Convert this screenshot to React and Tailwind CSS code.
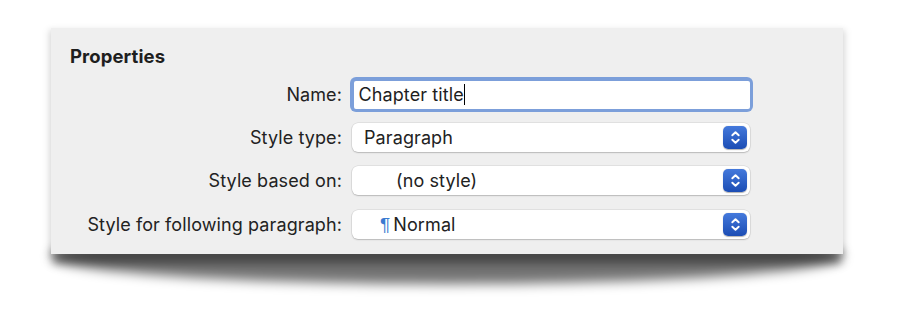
import React from "react";

function Stepper() {
  return (
    <div className="w-[24px] h-[23px] rounded-[5px] bg-gradient-to-b from-[#4479dc] to-[#1c4db4] flex items-center justify-center shadow-[0_0.5px_1px_rgba(0,0,0,0.3)]">
      <svg width="11" height="15" viewBox="0 0 11 15" fill="none" stroke="white" strokeWidth="1.9" strokeLinecap="round" strokeLinejoin="round">
        <path d="M2.3 5.3 L5.5 2.2 L8.7 5.3" />
        <path d="M2.3 9.7 L5.5 12.8 L8.7 9.7" />
      </svg>
    </div>
  );
}

function Popup({ children }) {
  return (
    <div className="h-[29px] w-[398px] bg-white rounded-[6px] shadow-[0_0_0_0.5px_rgba(0,0,0,0.12),0_1px_1.5px_rgba(0,0,0,0.18)] flex items-center pr-[3px]">
      <div className="flex-1 flex items-center">{children}</div>
      <Stepper />
    </div>
  );
}

function Row({ label, children, className }) {
  return (
    <div className={"flex items-center " + className}>
      <div className="w-[272px] text-right">{label}</div>
      <div className="ml-[10px] flex items-center">{children}</div>
    </div>
  );
}

export default function App() {
  const font = { fontFamily: 'Inter, "Liberation Sans", Arial, sans-serif' };
  return (
    <div className="w-[897px] h-[325px] bg-white pt-[28px] pl-[51px] overflow-hidden" style={font}>
      <div className="relative w-[792px]">
        <div className="absolute left-[0px] right-[0px] top-[200px] h-[56px] rounded-[50%] bg-black/55 blur-[6px]" />
        <div className="absolute left-[2px] right-[2px] top-[222px] h-[14px] bg-black/35 blur-[4px]" />
        <div className="absolute -left-[2px] -right-[2px] top-[2px] h-[226px] bg-black/15 blur-[3px]" />
        <div className="relative bg-[#efefef] h-[226px] pl-[19px] pt-[17px] text-[#222] text-[18px] tracking-[0.1px]">
          <div className="font-bold text-[18.5px] leading-[22px] text-[#1e1e1e]">Properties</div>
          <Row label="Name:" className="h-[35px] mt-[10px]">
            <div className="-ml-[2px] w-[403px] h-[35px] rounded-[6px] bg-[#7c9fda] p-[3.5px]">
              <div className="h-full bg-white rounded-[2px] flex items-center pl-[5px] text-[#1e1e1e]">
                <span>Chapter title</span>
                <span className="w-[1px] h-[21px] bg-black ml-[0.5px]" />
              </div>
            </div>
          </Row>
          <Row label="Style type:" className="h-[29px] mt-[11px]">
            <Popup><span className="pl-[12px]">Paragraph</span></Popup>
          </Row>
          <Row label="Style based on:" className="h-[29px] mt-[14px]">
            <Popup><span className="pl-[44px]">(no style)</span></Popup>
          </Row>
          <Row label="Style for following paragraph:" className="h-[29px] mt-[15px]">
            <Popup>
              <span className="pl-[28px] text-[#3a7ad0] text-[19px] leading-none" style={{ fontFamily: '"Liberation Sans", Arial, sans-serif' }}>¶</span>
              <span className="pl-[3px]">Normal</span>
            </Popup>
          </Row>
        </div>
      </div>
    </div>
  );
}
